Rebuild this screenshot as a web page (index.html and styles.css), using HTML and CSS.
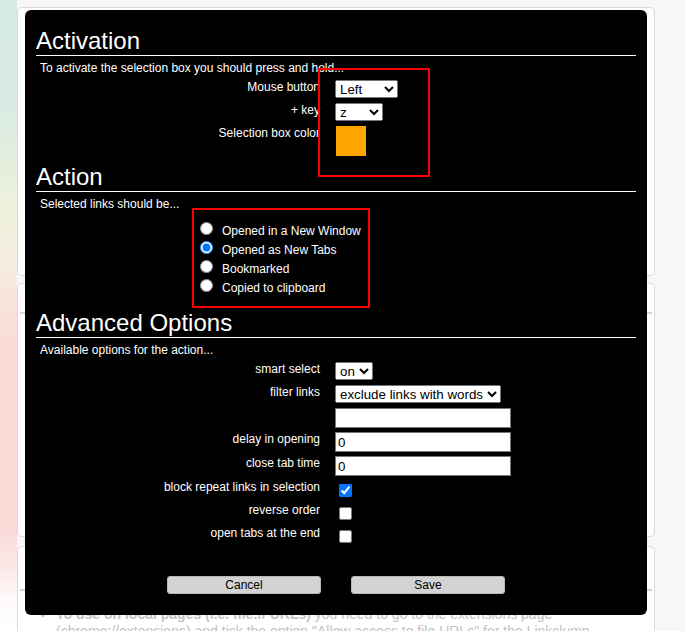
FILE: index.html
```html
<!DOCTYPE html>
<html>
<head>
<meta charset="utf-8">
<title>Linkclump Options</title>
<link rel="stylesheet" href="styles.css">
</head>
<body>
<div class="page">
	<div class="side"></div>
	<div class="cards">
		<div class="card card-one"></div>
		<div class="card card-two"><div class="rule"></div></div>
		<div class="card card-three">
			<div class="rule"></div>
			<ul class="notes">
				<li><b>To use on local pages (i.e. file:// URLs)</b> you need to go to the extensions page (chrome://extensions) and tick the option "Allow access to file URLs" for the Linkclump extension.</li>
			</ul>
		</div>
	</div>
</div>

<div class="dialog">
	<h2 class="first">Activation</h2>
	<p>To activate the selection box you should press and hold...</p>
	<div class="form">
		<label>Mouse button</label>
		<div class="ctl"><select class="sel-mouse"><option>Left</option><option>Middle</option><option>Right</option></select></div>
		<label>+ key</label>
		<div class="ctl"><select class="sel-key"><option>z</option><option>shift</option><option>ctrl</option><option>alt</option></select></div>
		<label>Selection box color</label>
		<div class="ctl-color"><div class="swatch"></div></div>
	</div>

	<h2>Action</h2>
	<p>Selected links should be...</p>
	<div class="radios">
		<div class="radio-row"><input type="radio" name="action" id="act-win"><label for="act-win">Opened in a New Window</label></div>
		<div class="radio-row"><input type="radio" name="action" id="act-tabs" checked><label for="act-tabs">Opened as New Tabs</label></div>
		<div class="radio-row"><input type="radio" name="action" id="act-book"><label for="act-book">Bookmarked</label></div>
		<div class="radio-row"><input type="radio" name="action" id="act-copy"><label for="act-copy">Copied to clipboard</label></div>
	</div>

	<h2 class="advanced">Advanced Options</h2>
	<p>Available options for the action...</p>
	<div class="form">
		<label>smart select</label>
		<div class="ctl"><select class="sel-smart"><option>on</option><option>off</option></select></div>
		<label>filter links</label>
		<div class="ctl"><select class="sel-filter"><option>exclude links with words</option><option>include links with words</option></select></div>
		<label></label>
		<div class="ctl-input"><input type="text" class="text"></div>
		<label>delay in opening</label>
		<div class="ctl-input"><input type="text" class="text" value="0"></div>
		<label>close tab time</label>
		<div class="ctl-input"><input type="text" class="text" value="0"></div>
		<label>block repeat links in selection</label>
		<div class="ctl-check"><input type="checkbox" checked></div>
		<label>reverse order</label>
		<div class="ctl-check"><input type="checkbox"></div>
		<label>open tabs at the end</label>
		<div class="ctl-check"><input type="checkbox"></div>
	</div>

	<div class="buttons">
		<button>Cancel</button>
		<button>Save</button>
	</div>

	<div class="mark mark-activation"></div>
	<div class="mark mark-action"></div>
</div>
</body>
</html>
```

FILE: styles.css
```css
body {
	margin:0;
	background-color:#f7f7f7;
	font-family:"Liberation Sans", Arial, sans-serif;
	font-size:12px;
}
.page {
	display:flex;
	height:631px;
	overflow:hidden;
}
.side {
	width:17px;
	flex:none;
	background: linear-gradient(to bottom, #d5e9e5 0, #d9ebe2 110px, #e6efdc 170px, #eef2dc 215px, #f6ede0 260px, #f8e4dc 300px, #f9dcd8 340px, #f9dbd8 530px, #fbe9e7 570px, #fefafa 600px, #fff 631px);
}
.cards {
	width:638px;
	flex:none;
	display:flex;
	flex-direction:column;
}
.card {
	background-color:#fff;
	border:1px solid #dadada;
	border-radius:5px;
	box-sizing:border-box;
	flex:none;
}
.card-one {
	margin-top:7px;
	height:269px;
}
.card-two {
	margin-top:7px;
	height:254px;
	padding-top:28px;
}
.card-three {
	margin-top:9px;
	height:200px;
	padding-top:42px;
}
.rule {
	height:2px;
	margin:0 2px;
	background-color:#d4d4d4;
}
.notes {
	margin:15px 0 0 0;
	padding:0 20px 0 38px;
	font-size:14px;
	line-height:17px;
	color:#c2c2c2;
}

/* options dialog */
.dialog {
	position:absolute;
	left:25px;
	top:10px;
	width:622px;
	height:605px;
	box-sizing:border-box;
	padding:0 11px;
	background-color:#000;
	border-radius:6px;
	color:#fff;
}
.dialog h2 {
	margin:7px 0 0 0;
	font-size:24px;
	font-weight:normal;
	line-height:28px;
	border-bottom:1px solid #fff;
}
.dialog h2.first {
	margin-top:17px;
}
.dialog h2.advanced {
	margin-top:14px;
}
.dialog p {
	margin:5px 0 0 0;
	padding-left:4px;
	line-height:14px;
}
.form {
	display:grid;
	grid-template-columns:284px auto;
	column-gap:15px;
	row-gap:4px;
	margin-top:5px;
	justify-content:start;
	align-items:start;
}
.form label {
	text-align:right;
	line-height:14px;
	min-height:14px;
}
.ctl {
	height:19px;
}
.ctl-color {
	height:30px;
}
.ctl-input {
	height:20px;
}
.ctl-check {
	height:19px;
}
select {
	display:block;
	height:18px;
	margin:0;
	font-family:"Liberation Sans", Arial, sans-serif;
	font-size:13.333px;
}
.sel-mouse {
	width:63px;
}
.sel-key {
	width:48px;
}
.sel-smart {
	width:38px;
}
.sel-filter {
	width:166px;
}
.text {
	display:block;
	width:176px;
	height:20px;
	box-sizing:border-box;
	margin:0;
	padding:1px 2px;
	border:1px solid #767676;
	font-family:"Liberation Sans", Arial, sans-serif;
	font-size:13.333px;
}
.ctl-check input {
	display:block;
	width:13px;
	height:13px;
	margin:4px 0 0 4px;
}
.swatch {
	width:30px;
	height:30px;
	margin-left:1px;
	background-color:#ffa500;
}
.radios {
	margin:8px 0 0 164px;
}
.radio-row {
	display:flex;
	align-items:flex-start;
	height:19px;
}
.radio-row input {
	width:13px;
	height:13px;
	margin:3px 0 0 0;
}
.radio-row label {
	margin:5px 0 0 9px;
	line-height:14px;
}
.buttons {
	display:flex;
	justify-content:center;
	gap:30px;
	margin-top:31px;
}
.buttons button {
	width:154px;
	height:18px;
	padding:0;
	border:1px solid #b8b8b8;
	border-radius:3px;
	background-color:#d3d3d3;
	color:#000;
	font-family:"Liberation Sans", Arial, sans-serif;
	font-size:12px;
}

/* red highlight boxes drawn over the dialog */
.mark {
	position:absolute;
	box-sizing:border-box;
	border:2px solid #f00;
}
.mark-activation {
	left:293px;
	top:58px;
	width:112px;
	height:109px;
}
.mark-action {
	left:167px;
	top:198px;
	width:178px;
	height:100px;
}
```
